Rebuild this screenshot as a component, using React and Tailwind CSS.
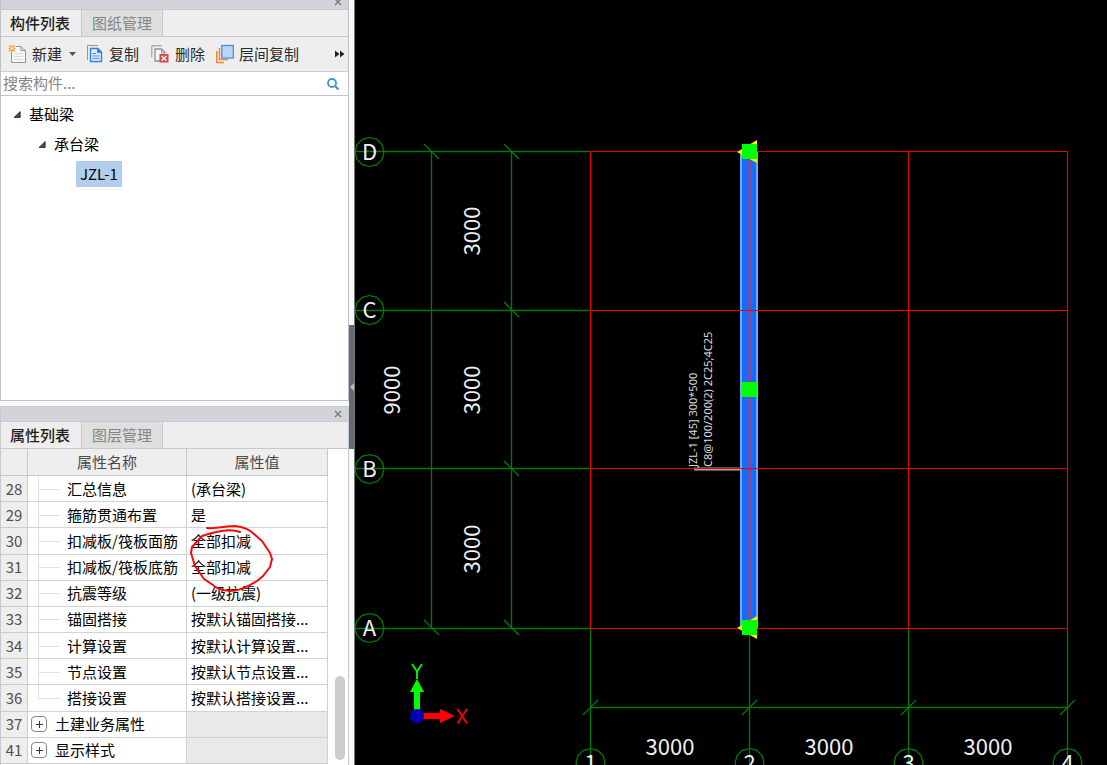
import React from "react";

const properties = [
  { no: 28, name: "汇总信息", value: "(承台梁)" },
  { no: 29, name: "箍筋贯通布置", value: "是" },
  { no: 30, name: "扣减板/筏板面筋", value: "全部扣减" },
  { no: 31, name: "扣减板/筏板底筋", value: "全部扣减" },
  { no: 32, name: "抗震等级", value: "(一级抗震)" },
  { no: 33, name: "锚固搭接", value: "按默认锚固搭接..." },
  { no: 34, name: "计算设置", value: "按默认计算设置..." },
  { no: 35, name: "节点设置", value: "按默认节点设置..." },
  { no: 36, name: "搭接设置", value: "按默认搭接设置...", last: true },
  { no: 37, name: "土建业务属性", group: true },
  { no: 41, name: "显示样式", group: true },
];

function TitleBar({ className }) {
  return (
    <div className={`flex shrink-0 items-center justify-end bg-[#d2d4d9] pr-1.5 ${className}`}>
      <button type="button" aria-label="关闭" className="flex">
        <svg width="8" height="8" viewBox="0 0 8 8" stroke="#7b7d82" strokeWidth="1.5">
          <path d="M1 1L7 7M7 1L1 7" />
        </svg>
      </button>
    </div>
  );
}

function Tabs({ active, other }) {
  return (
    <div role="tablist" className="flex h-7 shrink-0 border-y border-[#c6cad0] bg-[#eeeeee]">
      <button type="button" role="tab" aria-selected="true" className="w-20 pr-0.5 font-medium text-[#1e1e1e]">
        {active}
      </button>
      <button
        type="button"
        role="tab"
        aria-selected="false"
        className="w-[82px] border-x border-[#c3c8ce] bg-[#dfdfdf] text-[#858585]"
      >
        {other}
      </button>
    </div>
  );
}

function NewIcon() {
  return (
    <svg width="18" height="18" viewBox="0 0 18 18" fill="none">
      <path d="M3.5 7V17.5H17.5V5.5L13 1.5H8" fill="#f5f6f7" stroke="#8b959d" />
      <path d="M13 1.5V5.5H17.5" fill="#d5dade" stroke="#8b959d" />
      <path d="M6 8.5H15M6 11.5H15M6 14.5H15" stroke="#d8dcdf" />
      <path d="M4 0V7M.5 3.5H7.5M1 .5L7 6.5M7 .5L1 6.5" stroke="#f5a030" strokeWidth="1.2" />
      <circle cx="4" cy="3.5" r="1.2" fill="#fff3d8" />
    </svg>
  );
}

function CopyIcon() {
  return (
    <svg width="16" height="18" viewBox="0 0 16 18" fill="none">
      <path d="M.5 15V.5H11" stroke="#8b98a5" />
      <path d="M3.5 3.5H11L14.5 7V16.5H3.5Z" fill="#dcebff" stroke="#3a80d8" strokeWidth="1.4" />
      <path d="M10.5 3.5V7.5H14.5" fill="#3a80d8" stroke="#3a80d8" />
      <path d="M5.5 8.5H9M5.5 11H12.5M5.5 13.5H12.5" stroke="#4b8ee0" />
    </svg>
  );
}

function DeleteIcon() {
  return (
    <svg width="18" height="18" viewBox="0 0 18 18" fill="none">
      <path d="M.8 12.5V.8H11" stroke="#8b959d" />
      <path d="M9 16H4V4H10.5L14.5 8" fill="#f5f5f5" stroke="#8b959d" strokeWidth="1.3" />
      <path d="M10.5 4V8H14.5" stroke="#8b959d" />
      <rect x="8.5" y="9" width="9" height="8.5" fill="#d84747" />
      <path d="M10.5 11L15.5 15.8M15.5 11L10.5 15.8" stroke="#fff" strokeWidth="1.3" />
    </svg>
  );
}

function LayerIcon() {
  return (
    <svg width="18" height="20" viewBox="0 0 18 20" fill="none">
      <path d="M.8 7V18.5H8M3.5 4V15.5H12" stroke="#ee8432" strokeWidth="1.5" />
      <rect x="5.8" y="1.5" width="11.5" height="12.5" fill="#b9d7fb" stroke="#4a8ee0" strokeWidth="1.3" />
    </svg>
  );
}

function Expander() {
  return (
    <svg width="8" height="8" viewBox="0 0 8 8">
      <path d="M7.2 1.6V7.5H1Z" fill="#4a4a4a" stroke="#222" strokeWidth=".8" />
    </svg>
  );
}

function ComponentPanel() {
  return (
    <section className="flex h-[401px] shrink-0 flex-col border-x border-b border-[#bfc3c8] bg-white">
      <TitleBar className="h-[9px] overflow-hidden pb-1.5" />
      <Tabs active="构件列表" other="图纸管理" />
      <div className="flex h-[35px] shrink-0 items-center border-b border-[#cbcfd3] bg-[#eeeeee] pl-[7px] pr-[3px] text-[#2b2b2b]">
        <button type="button" className="flex items-center gap-1.5">
          <NewIcon />
          新建
          <svg width="7" height="4" viewBox="0 0 7 4" className="ml-px">
            <path d="M0 0H7L3.5 4Z" fill="#555" />
          </svg>
        </button>
        <button type="button" className="ml-[11px] flex items-center gap-1.5">
          <CopyIcon />
          复制
        </button>
        <button type="button" className="ml-3 flex items-center gap-1.5">
          <DeleteIcon />
          删除
        </button>
        <button type="button" className="ml-[11px] flex items-center gap-[5px]">
          <LayerIcon />
          层间复制
        </button>
        <button type="button" aria-label="更多" className="ml-auto">
          <svg width="10" height="8" viewBox="0 0 10 8" fill="#222">
            <path d="M0 .5L4.5 4L0 7.5ZM5 .5L9.5 4L5 7.5Z" />
          </svg>
        </button>
      </div>
      <div className="flex h-6 shrink-0 items-center border-b border-[#c0c6cc] pr-2">
        <input
          type="text"
          aria-label="搜索构件"
          placeholder="搜索构件..."
          className="min-w-0 flex-1 bg-transparent pl-0.5 outline-none placeholder:text-[#858585]"
        />
        <button type="button" aria-label="搜索">
          <svg width="14" height="14" viewBox="0 0 14 14" fill="none" stroke="#4295cf">
            <circle cx="6" cy="6" r="4" strokeWidth="1.8" />
            <path d="M9 9L12.5 12.5" strokeWidth="2.3" />
          </svg>
        </button>
      </div>
      <ul className="flex flex-col pt-[3px] text-black">
        <li className="flex h-[30px] items-center gap-2 pl-3">
          <Expander />
          基础梁
        </li>
        <li className="flex h-[30px] items-center gap-2 pl-[37px]">
          <Expander />
          承台梁
        </li>
        <li className="flex h-[30px] items-center pl-[75px]">
          <span className="flex h-[26px] items-center bg-[#b2cdee] px-1">JZL-1</span>
        </li>
      </ul>
    </section>
  );
}

function PropertyRow({ row }) {
  return (
    <tr>
      <th scope="row" className="border-b border-r border-[#cccccc] bg-[#eeeeee] font-normal text-[#505050]">
        {row.no}
      </th>
      <td
        className={`relative whitespace-nowrap border-b border-r border-[#d2d2d2] ${row.group ? "pl-[3px]" : "pl-[39px]"}`}
      >
        {row.group ? (
          <span className="flex items-center gap-2">
            <button
              type="button"
              aria-label={`展开${row.name}`}
              className="flex size-4 items-center justify-center rounded-sm border border-[#858585] bg-white"
            >
              <svg width="7" height="7" viewBox="0 0 7 7" stroke="#333">
                <path d="M3.5 0V7M0 3.5H7" />
              </svg>
            </button>
            {row.name}
          </span>
        ) : (
          <>
            <span
              className={`absolute left-2.5 top-0 border-l border-[#e0e0e0] ${row.last ? "bottom-1/2" : "bottom-0"}`}
            />
            <span className="absolute left-2.5 top-1/2 w-[21px] border-t border-[#e0e0e0]" />
            {row.name}
          </>
        )}
      </td>
      <td
        className={`whitespace-nowrap border-b border-r border-[#d2d2d2] pl-1 ${row.group ? "bg-[#e9e9e9]" : ""}`}
      >
        {row.value}
      </td>
    </tr>
  );
}

function PropertyPanel() {
  return (
    <section className="mt-[5px] flex min-h-0 flex-1 flex-col border-x border-t border-[#c6cad0] bg-white">
      <TitleBar className="h-3.5" />
      <Tabs active="属性列表" other="图层管理" />
      <div className="relative flex min-h-0 flex-1 pb-px">
        <table className="h-full w-[327px] table-fixed border-separate border-spacing-0 leading-5 text-black">
          <colgroup>
            <col className="w-[27px]" />
            <col className="w-[159px]" />
            <col />
          </colgroup>
          <thead>
            <tr className="h-[27px] bg-[#eeeeee] text-[#4a4a4a]">
              <th aria-label="序号" className="border-b border-r border-[#c8c8c8]" />
              <th scope="col" className="border-b border-r border-[#c8c8c8] font-normal">
                属性名称
              </th>
              <th scope="col" className="border-b border-r border-[#c8c8c8] font-normal">
                属性值
              </th>
            </tr>
          </thead>
          <tbody>
            {properties.map((row) => (
              <PropertyRow key={row.no} row={row} />
            ))}
          </tbody>
        </table>
        <div className="flex flex-1 flex-col items-end justify-end pb-1 pr-[3px]">
          <div className="h-[84px] w-2.5 rounded-full bg-[#cdcdcd]" />
        </div>
        <svg
          className="pointer-events-none absolute left-[184px] top-[73px]"
          width="92"
          height="72"
          viewBox="185 522 92 72"
          fill="none"
          stroke="#f50a0a"
          strokeWidth="2"
          strokeLinecap="round"
          strokeLinejoin="round"
        >
          <path d="M207 528C217 529 226 526 235 526C244 527 250 530 254 534L262 541L270 553L272 559L270 567L263 576L257 581C249 586 240 591 230 591C222 590 216 589 213 585L204 579L195 566L191 553L192 547L202 536C213 532 230 528 240 532" />
        </svg>
      </div>
    </section>
  );
}

const LEVELS = [
  { label: "D", y: 152 },
  { label: "C", y: 310 },
  { label: "B", y: 469 },
  { label: "A", y: 628 },
];

const AXES = [
  { label: "1", x: 590 },
  { label: "2", x: 749 },
  { label: "3", x: 908 },
  { label: "4", x: 1067 },
];

function Bubble({ x, y, label }) {
  const points = Array.from({ length: 12 }, (_, i) => {
    const a = (i * Math.PI) / 6;
    return `${(x + 14.5 * Math.cos(a)).toFixed(1)},${(y + 14.5 * Math.sin(a)).toFixed(1)}`;
  }).join(" ");
  return (
    <g>
      <polygon points={points} fill="none" stroke="#008000" strokeWidth="1.2" />
      <text x={x} y={y + 8} fontSize="22" fill="#f0f0f0" textAnchor="middle">
        {label}
      </text>
    </g>
  );
}

function Handle({ x, y }) {
  return (
    <g>
      <path d={`M${x - 13} ${y}L${x + 7} ${y - 12}V${y + 11}Z`} fill="#ffee00" />
      <rect x={x - 8} y={y - 8} width="15" height="15" fill="#00ff00" />
    </g>
  );
}

function Drawing() {
  return (
    <svg
      className="h-full w-full font-['Noto_Sans_CJK_SC',sans-serif]"
      viewBox="355 0 752 765"
      preserveAspectRatio="xMinYMin slice"
      role="img"
      aria-label="基础梁平面图"
    >
      <g stroke="#007c00" fill="none" strokeWidth="1.3">
        {LEVELS.map((l) => (
          <path key={l.label} d={`M355 ${l.y + (l.label === "D" || l.label === "B" ? -0.5 : 0.5)}H590`} />
        ))}
        <path d="M431.5 152V628M511.5 152V628" />
        {LEVELS.map((l) => (
          <path key={l.label} d={`M504 ${l.y - 8}L519 ${l.y + 7}`} />
        ))}
        <path d="M424 144L439 159M424 620L439 635" />
        {AXES.map((a) => (
          <path key={a.label} d={`M${a.x + 0.5} 628V765M${a.x - 7} 715L${a.x + 8} 700`} />
        ))}
        <path d="M590 707.5H1067" />
      </g>

      <rect x="740" y="152" width="18" height="477" fill="#6fa8ff" />
      <rect x="742" y="152" width="14" height="477" fill="#126cff" />
      <path d="M749.5 152V628" stroke="#6f4fa8" strokeWidth="3" />
      <path d="M694 469H742" stroke="#a8a8a8" strokeWidth="3" />

      <g stroke="#e60000" fill="none" strokeWidth="1.2">
        <path d="M590 151.5H1068M590 310.5H1068M590 468.5H1068M590 628.5H1068" />
        <path d="M590.5 152V628M908.5 152V628M1067.5 152V628" />
      </g>

      <Handle x={750} y={152} />
      <Handle x={750} y={628} />
      <rect x="742" y="382" width="15" height="15" fill="#00ff00" />

      {LEVELS.map((l) => (
        <Bubble key={l.label} x={369.5} y={l.y} label={l.label} />
      ))}
      {AXES.map((a) => (
        <Bubble key={a.label} x={a.x + 0.5} y={763} label={a.label} />
      ))}

      <g fill="#f0f0f0" fontSize="22" textAnchor="middle">
        <text transform="translate(480 231) rotate(-90)">3000</text>
        <text transform="translate(480 390) rotate(-90)">3000</text>
        <text transform="translate(480 549) rotate(-90)">3000</text>
        <text transform="translate(400 390) rotate(-90)">9000</text>
        <text x="670" y="755">3000</text>
        <text x="829" y="755">3000</text>
        <text x="988" y="755">3000</text>
      </g>
      <g fill="#dcdcdc" fontSize="11" className="font-['Noto_Sans',sans-serif]">
        <text transform="translate(697 467) rotate(-90)">JZL-1 [45] 300*500</text>
        <text transform="translate(712 467) rotate(-90)">C8@100/200(2) 2C25;4C25</text>
      </g>

      <path d="M414 716V692H410L417 679L424 692H420V716Z" fill="#00ff00" />
      <path d="M417 713H440V709L455 716L440 723V719H417Z" fill="#ff0000" />
      <circle cx="417" cy="716" r="7" fill="#0000b8" />
      <path d="M412 664L417 671.5L422 664M417 671V679" stroke="#00ff00" strokeWidth="1.8" fill="none" />
      <path d="M457.5 709L467 723.5M467 709L457.5 723.5" stroke="#ff0000" strokeWidth="1.8" />
    </svg>
  );
}

export default function App() {
  return (
    <div className="flex h-screen overflow-hidden bg-[#f7f8fa] font-['Noto_Sans_CJK_SC',sans-serif] text-[15px]">
      <aside className="flex w-[349px] shrink-0 flex-col">
        <ComponentPanel />
        <PropertyPanel />
      </aside>
      <div className="flex w-1.5 shrink-0 flex-col border-r border-[#777]">
        <button
          type="button"
          aria-label="收起面板"
          className="mt-[325px] flex h-[124px] items-center justify-center bg-[#606b77]"
        >
          <svg width="4" height="8" viewBox="0 0 4 8">
            <path d="M4 0V8L0 4Z" fill="#b8bec5" />
          </svg>
        </button>
      </div>
      <main className="min-w-0 flex-1 bg-black">
        <Drawing />
      </main>
    </div>
  );
}
